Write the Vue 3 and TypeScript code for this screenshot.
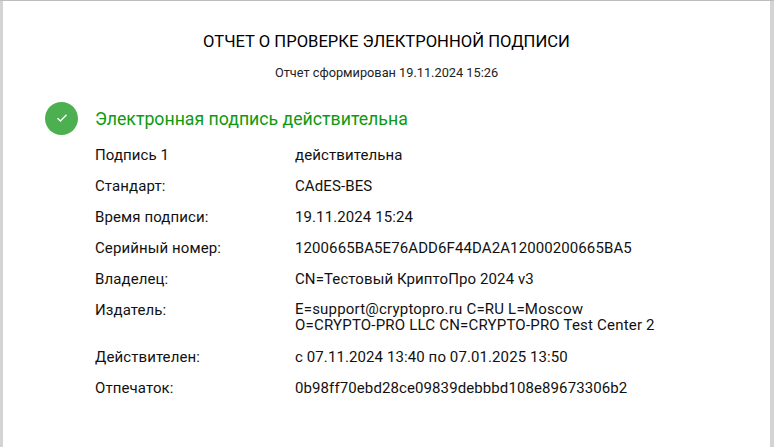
<script setup lang="ts">
interface Row { label: string; lines: string[]; tight?: boolean }
const rows: Row[] = [
  { label: 'Подпись 1', lines: ['действительна'] },
  { label: 'Стандарт:', lines: ['CAdES-BES'] },
  { label: 'Время подписи:', lines: ['19.11.2024 15:24'] },
  { label: 'Серийный номер:', lines: ['1200665BA5E76ADD6F44DA2A12000200665BA5'] },
  { label: 'Владелец:', lines: ['CN=Тестовый КриптоПро 2024 v3'] },
  { label: 'Издатель:', lines: ['E=support@cryptopro.ru C=RU L=Moscow', 'O=CRYPTO-PRO LLC CN=CRYPTO-PRO Test Center 2'], tight: true },
  { label: 'Действителен:', lines: ['с 07.11.2024 13:40 по 07.01.2025 13:50'] },
  { label: 'Отпечаток:', lines: ['0b98ff70ebd28ce09839debbbd108e89673306b2'] },
]
</script>

<template>
  <div class="frame">
    <main class="sheet">
      <h1 class="title">ОТЧЕТ О ПРОВЕРКЕ ЭЛЕКТРОННОЙ ПОДПИСИ</h1>
      <p class="stamp">Отчет сформирован 19.11.2024 15:26</p>
      <div class="status">
        <span class="badge">
          <svg width="12" height="10" viewBox="0 0 12 10" fill="none">
            <path d="M1.5 5.2 4.4 8 10.5 1.8" stroke="#fff" stroke-width="1.4" />
          </svg>
        </span>
        <span class="status-text">Электронная подпись действительна</span>
      </div>
      <div class="rows">
        <div v-for="row in rows" :key="row.label" class="row">
          <div class="label">{{ row.label }}</div>
          <div class="value" :class="{ 'value-multi': row.tight }">
            <div v-for="line in row.lines" :key="line">{{ line }}</div>
          </div>
        </div>
      </div>
    </main>
  </div>
</template>

<style>
html, body { margin: 0; padding: 0; background: #fff; }
</style>

<style scoped>
.frame {
  width: 774px;
  height: 447px;
  box-sizing: border-box;
  overflow: hidden;
  background: #d4d4d6;
  padding: 0 4px 0 3px;
  border-top: 1px solid #bdbdbd;
  font-family: Roboto, "Liberation Sans", sans-serif;
  color: #111;
}
.sheet {
  height: 100%;
  background: #fff;
  box-sizing: border-box;
  padding-top: 31px;
}
.title {
  margin: 0;
  font-size: 16.6px;
  font-weight: 400;
  line-height: 20px;
  text-align: center;
  color: #000;
}
.stamp {
  margin: 13px 0 0;
  font-size: 12.75px;
  line-height: 16px;
  text-align: center;
  color: #222;
}
.status {
  display: flex;
  align-items: center;
  gap: 17px;
  margin: 20px 0 0 42px;
  height: 34px;
}
.badge {
  width: 33px;
  height: 33px;
  border-radius: 50%;
  background: #4caf50;
  display: flex;
  align-items: center;
  justify-content: center;
}
.status-text {
  font-size: 17.7px;
  line-height: 22px;
  padding-top: 1px;
  color: #0c9a12;
}
.rows {
  margin: 12px 0 0 92px;
  display: flex;
  flex-direction: column;
  gap: 15px;
}
.row {
  display: flex;
  font-size: 15px;
  letter-spacing: 0.1px;
  line-height: 16px;
}
.label { width: 200px; flex: none; }
.value { line-height: 16px; }
.value-multi { line-height: 15.5px; letter-spacing: 0.2px; padding-bottom: 1px; }
</style>
